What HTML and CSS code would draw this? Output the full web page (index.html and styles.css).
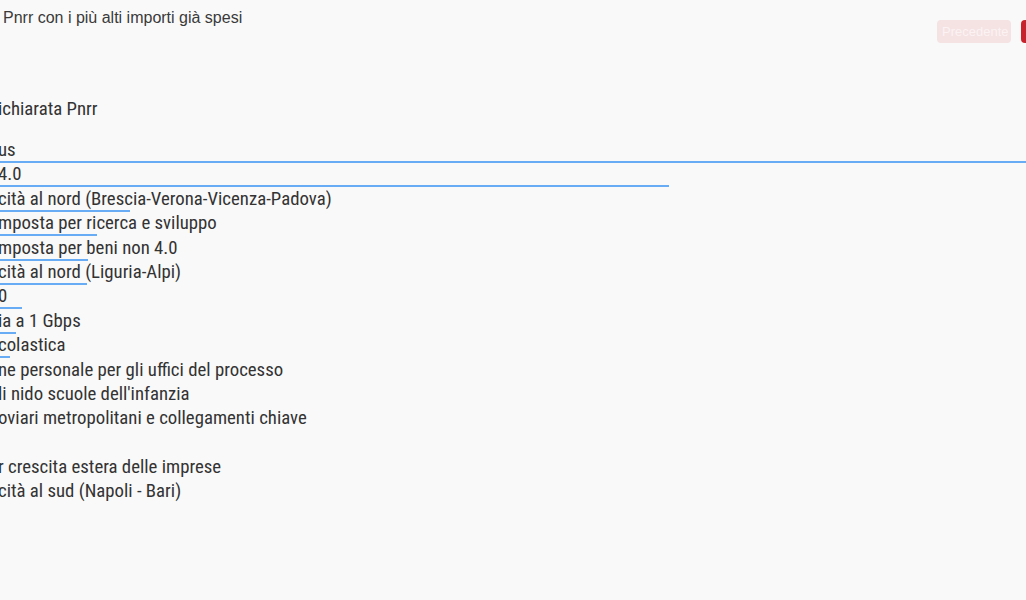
FILE: index.html
```html
<!DOCTYPE html>
<html lang="it">
<head>
<meta charset="utf-8">
<title>Pnrr</title>
<link rel="stylesheet" href="styles.css">
</head>
<body>
<div class="top">
  <div class="title">Pnrr con i più alti importi già spesi</div>
  <div class="pager">
    <button class="btn btn-prev" disabled>Precedente</button>
    <button class="btn btn-next">Successivo</button>
  </div>
</div>
<div class="chart">
  <div class="chart-head">ichiarata Pnrr</div>
  <div class="rows">
    <div class="row"><span class="label">us</span><span class="bar" style="width:1030px"></span></div>
    <div class="row"><span class="label">4.0</span><span class="bar" style="width:671px"></span></div>
    <div class="row"><span class="label">cità al nord (Brescia-Verona-Vicenza-Padova)</span><span class="bar" style="width:132px"></span></div>
    <div class="row"><span class="label">mposta per ricerca e sviluppo</span><span class="bar" style="width:99px"></span></div>
    <div class="row"><span class="label">mposta per beni non 4.0</span><span class="bar" style="width:90px"></span></div>
    <div class="row"><span class="label">cità al nord (Liguria-Alpi)</span><span class="bar" style="width:89px"></span></div>
    <div class="row"><span class="label">0</span><span class="bar" style="width:24px"></span></div>
    <div class="row"><span class="label">ia a 1 Gbps</span><span class="bar" style="width:18px"></span></div>
    <div class="row"><span class="label">colastica</span><span class="bar" style="width:12px"></span></div>
    <div class="row"><span class="label">ne personale per gli uffici del processo</span><span class="bar" style="width:0px"></span></div>
    <div class="row"><span class="label">li nido scuole dell'infanzia</span><span class="bar" style="width:0px"></span></div>
    <div class="row"><span class="label">oviari metropolitani e collegamenti chiave</span><span class="bar" style="width:0px"></span></div>
    <div class="row"><span class="label"></span><span class="bar" style="width:0px"></span></div>
    <div class="row"><span class="label">r crescita estera delle imprese</span><span class="bar" style="width:0px"></span></div>
    <div class="row"><span class="label">cità al sud (Napoli - Bari)</span><span class="bar" style="width:0px"></span></div>
  </div>
</div>
</body>
</html>
```
FILE: styles.css
```css
html, body {
  margin: 0;
  padding: 0;
  background: #f9f9f9;
  overflow: hidden;
}
body {
  width: 1026px;
  height: 600px;
  color: #333333;
}
.top {
  display: flex;
  justify-content: space-between;
  align-items: flex-start;
  padding-top: 8px;
}
.title {
  font-family: "Liberation Sans", Arial, sans-serif;
  font-size: 16px;
  line-height: 20px;
  color: #3a3a3a;
  padding-left: 3px;
}
.pager {
  display: flex;
  gap: 10px;
  margin-top: 12px;
  margin-right: -75px;
}
.btn {
  font-family: "Liberation Sans", Arial, sans-serif;
  font-size: 13px;
  height: 23px;
  padding: 0 5px;
  border: none;
  border-radius: 4px;
  color: #ffffff;
  cursor: pointer;
}
.btn-prev {
  background: #f5e2e3;
  color: #fbf3f3;
  width: 74px;
}
.btn-next {
  background: #c8232d;
  width: 80px;
  padding-left: 8px;
}
.chart {
  font-family: "Roboto", "Liberation Sans Narrow", sans-serif;
  font-stretch: 75%;
  font-size: 18.8px;
  color: #333333;
  margin-top: 54px;
  margin-left: -2px;
}
.chart-head {
  line-height: 24px;
  height: 43px;
}
.rows {
  display: flex;
  flex-direction: column;
}
.row {
  height: 24.4px;
  display: flex;
  flex-direction: column;
  justify-content: flex-end;
}
.label {
  display: block;
  line-height: 21px;
  height: 21px;
  white-space: nowrap;
}
.bar {
  display: block;
  height: 2px;
  background: #68acf6;
  margin-bottom: 1.4px;
}
```
